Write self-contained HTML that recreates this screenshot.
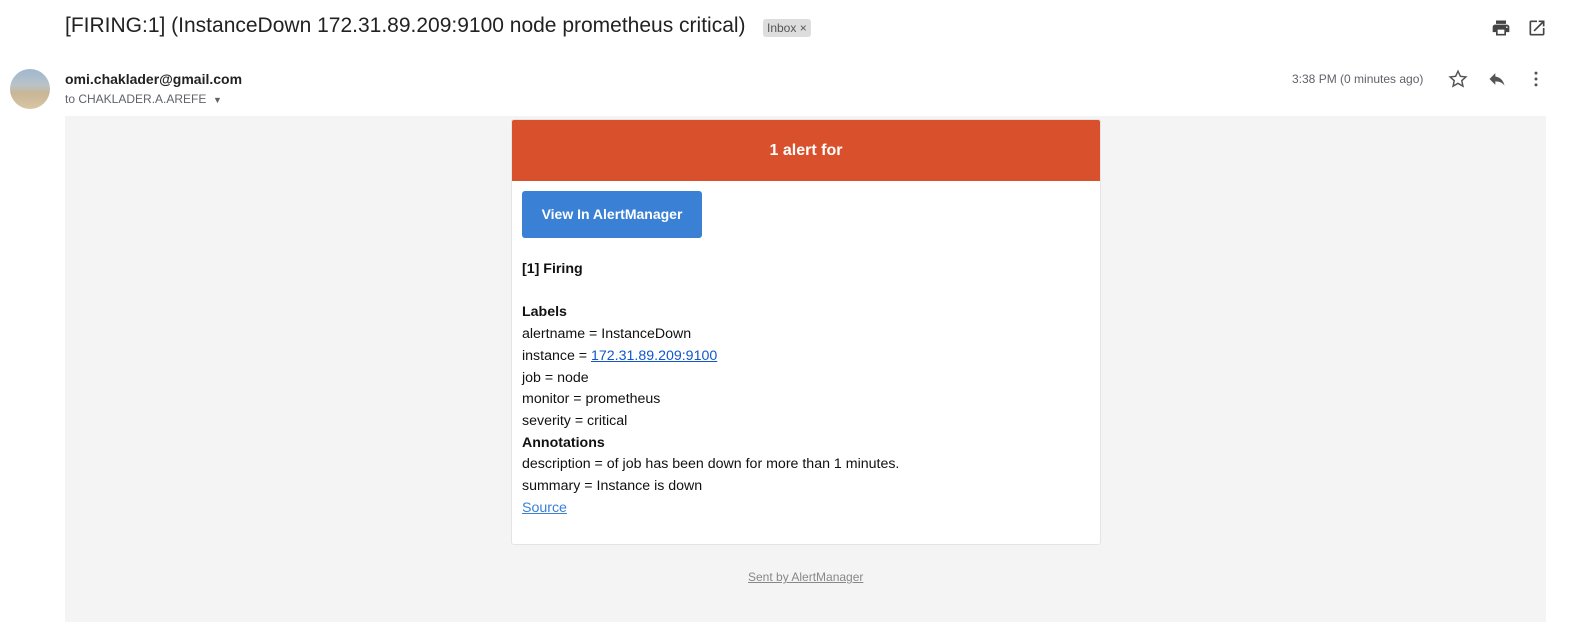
<!DOCTYPE html>
<html><head><meta charset="utf-8"><style>
*{margin:0;padding:0;box-sizing:border-box}
body{width:1592px;height:632px;background:#fff;font-family:"Liberation Sans",Arial,sans-serif;position:relative;overflow:hidden;color:#222}
.abs{position:absolute}
.subj{left:65px;top:14px;font-size:21px;color:#222;white-space:nowrap}
.tag{left:763px;top:19px;background:#ddd;color:#555;font-size:12px;padding:2px 4px;border-radius:3px}
.from{left:65px;top:71px;font-size:14px;font-weight:bold;color:#222}
.to{left:65px;top:92px;font-size:12px;color:#5f6368}
.time{left:1292px;top:72px;font-size:12px;color:#5f6368}
.grey{left:65px;top:116px;width:1481px;height:506px;background:#f4f4f4}
.card{left:511px;top:119px;width:590px;height:426px;background:#fff;border:1px solid #e4e4e4;border-radius:3px;overflow:hidden}
.hdr{height:61px;background:#d9512c;color:#fff;font-weight:bold;font-size:16px;text-align:center;line-height:62px}
.btn{position:absolute;left:10px;top:71px;width:180px;height:47px;background:#3a80d5;border-radius:3px;color:#fff;font-weight:bold;font-size:14px;text-align:center;line-height:47px}
.body{position:absolute;left:10px;top:139px;font-size:14.2px;line-height:21.7px;color:#111}
a{color:#1155cc}
.foot{left:748px;top:570px;font-size:12px;color:#888;text-decoration:underline}
</style></head><body>
<div class="abs subj">[FIRING:1] (InstanceDown 172.31.89.209:9100 node prometheus critical)</div>
<div class="abs tag">Inbox ×</div>
<svg class="abs" style="left:1491px;top:18px" width="20" height="20" viewBox="0 0 24 24"><path fill="#444" d="M19 8H5c-1.66 0-3 1.34-3 3v6h4v4h12v-4h4v-6c0-1.66-1.34-3-3-3zm-3 11H8v-5h8v5zm3-7c-.55 0-1-.45-1-1s.45-1 1-1 1 .45 1 1-.45 1-1 1zm-1-9H6v4h12V3z"/></svg>
<svg class="abs" style="left:1527px;top:18px" width="20" height="20" viewBox="0 0 24 24"><path fill="#444" d="M19 19H5V5h7V3H5a2 2 0 0 0-2 2v14a2 2 0 0 0 2 2h14c1.1 0 2-.9 2-2v-7h-2v7zM14 3v2h3.59l-9.83 9.83 1.41 1.41L19 6.41V10h2V3h-7z"/></svg>
<div class="abs" style="left:10px;top:69px;width:40px;height:40px;border-radius:50%;background:linear-gradient(#9fb7cf 0,#b9c3c8 40%,#c9b596 60%,#d8c5a5 100%)"></div>
<div class="abs from">omi.chaklader@gmail.com</div>
<div class="abs to">to CHAKLADER.A.AREFE &nbsp;<span style="font-size:9px">▼</span></div>
<div class="abs time">3:38 PM (0 minutes ago)</div>
<svg class="abs" style="left:1447px;top:68px" width="22" height="22" viewBox="0 0 24 24"><path fill="none" stroke="#555" stroke-width="1.6" d="M12 3.5l2.6 5.6 6 .6-4.5 4.1 1.3 6-5.4-3.1-5.4 3.1 1.3-6L3.4 9.7l6-.6z"/></svg>
<svg class="abs" style="left:1487px;top:69px" width="20" height="20" viewBox="0 0 24 24"><path fill="#555" d="M10 9V5l-7 7 7 7v-4.1c5 0 8.5 1.6 11 5.1-1-5-4-10-11-11z"/></svg>
<svg class="abs" style="left:1526px;top:69px" width="20" height="20" viewBox="0 0 24 24"><circle cx="12" cy="5" r="1.8" fill="#555"/><circle cx="12" cy="12" r="1.8" fill="#555"/><circle cx="12" cy="19" r="1.8" fill="#555"/></svg>
<div class="abs grey"></div>
<div class="abs card">
<div class="hdr">1 alert for</div>
<div class="btn">View In AlertManager</div>
<div class="body">
<b>[1] Firing</b><br><br>
<b>Labels</b><br>
alertname = InstanceDown<br>
instance = <a href="#">172.31.89.209:9100</a><br>
job = node<br>
monitor = prometheus<br>
severity = critical<br>
<b>Annotations</b><br>
description = of job has been down for more than 1 minutes.<br>
summary = Instance is down<br>
<a href="#" style="color:#3a80d5">Source</a>
</div>
</div>
<div class="abs foot">Sent by AlertManager</div>
</body></html>
